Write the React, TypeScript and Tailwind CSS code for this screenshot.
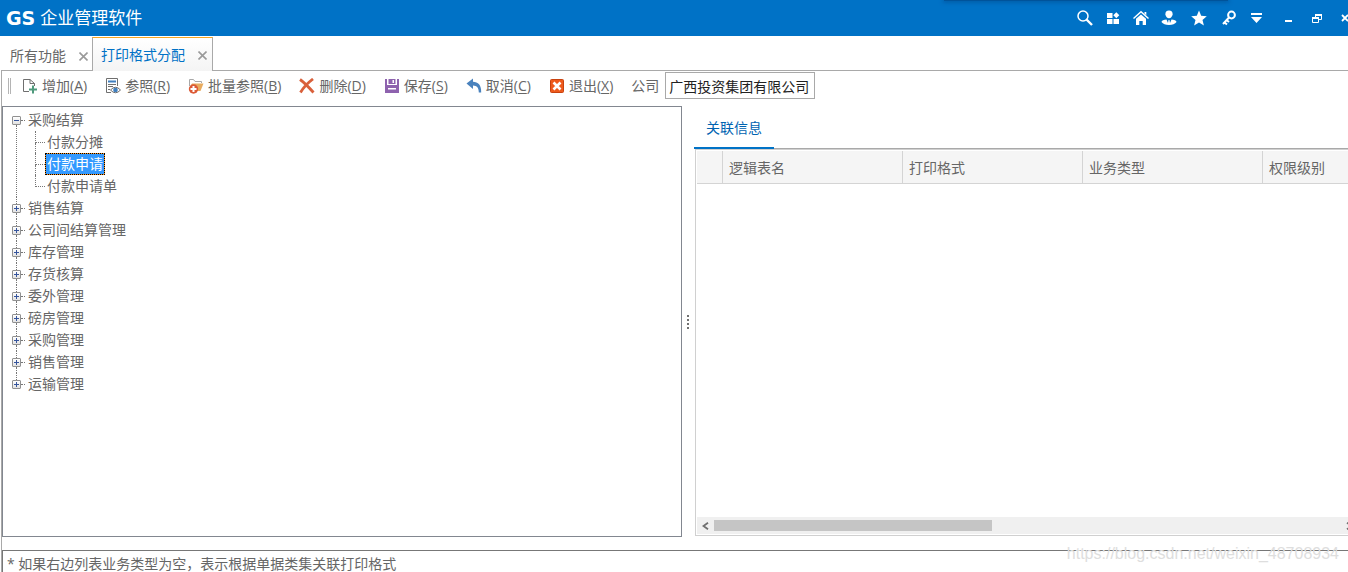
import { useState } from "react";
import type { ReactNode } from "react";

type TreeItem = { name: string; children?: string[] };

const tree: TreeItem[] = [
  { name: "采购结算", children: ["付款分摊", "付款申请", "付款申请单"] },
  { name: "销售结算" },
  { name: "公司间结算管理" },
  { name: "库存管理" },
  { name: "存货核算" },
  { name: "委外管理" },
  { name: "磅房管理" },
  { name: "采购管理" },
  { name: "销售管理" },
  { name: "运输管理" },
];

const columns = ["逻辑表名", "打印格式", "业务类型", "权限级别"];

const toolbar: { label: string; hotkey: string; icon: ReactNode }[] = [
  {
    label: "增加",
    hotkey: "A",
    icon: (
      <svg viewBox="0 0 16 16" className="h-4 w-4" fill="none">
        <path d="M7 13.5H1.5V1.5H8L12.5 5.5V8M8 1.5V5.5H12.5" stroke="#6f6f6f" />
        <path d="M11 7.5V15.5M7 11.5H15" stroke="#4f9a7c" strokeWidth="2" />
      </svg>
    ),
  },
  {
    label: "参照",
    hotkey: "R",
    icon: (
      <svg viewBox="0 0 16 16" className="h-4 w-4" fill="none">
        <path d="M6 14.5H1.5V.5H12.5V8" stroke="#6f6f6f" />
        <path d="M3 3.5H11" stroke="#3f7fbf" strokeWidth="2" />
        <path d="M3 6.5H11M3 8.5H8M3 11.5H5" stroke="#6f6f6f" />
        <path d="M5.5 12Q10.5 6.5 15.5 12Q10.5 17.5 5.5 12Z" fill="#fff" stroke="#6f6f6f" />
        <circle cx="10.5" cy="12" r="2.3" fill="#3f7fbf" />
      </svg>
    ),
  },
  {
    label: "批量参照",
    hotkey: "B",
    icon: (
      <svg viewBox="0 0 16 16" className="h-4 w-4" fill="none">
        <path d="M1.5 8V1.5H5.5L7 3.5H13.5V5" stroke="#a8a8a8" />
        <path d="M4 5.5H15.5L12.5 13H9L2.5 8Z" fill="#e8ab5f" />
        <circle cx="5.5" cy="11" r="4.7" fill="#dc5a36" />
        <path d="M5.5 8V14M2.5 11H8.5" stroke="#fff" strokeWidth="2" />
      </svg>
    ),
  },
  {
    label: "删除",
    hotkey: "D",
    icon: (
      <svg viewBox="0 0 16 16" className="h-4 w-4" fill="none">
        <path d="M1 1.5Q6 5 14.5 14.5M14 1Q6 7 1.5 14.5" stroke="#d9603b" strokeWidth="2.8" />
      </svg>
    ),
  },
  {
    label: "保存",
    hotkey: "S",
    icon: (
      <svg viewBox="0 0 16 16" className="h-4 w-4">
        <path d="M1 1H3V7H13V1H15V15H1Z" fill="#8e62ae" />
        <path d="M4.500 1H11.500V6H4.500Z" fill="#8e62ae" />
        <path d="M8.500 2H10V5H8.500ZM4 10H12V11.500H4Z" fill="#fff" />
      </svg>
    ),
  },
  {
    label: "取消",
    hotkey: "C",
    icon: (
      <svg viewBox="0 0 16 16" className="h-4 w-4">
        <path d="M.5 5.500L7 .5V3.800C12 4 15.500 7 15.200 14.500H12.800C12.800 10 11 7.800 7 7.600V11Z" fill="#4a82bd" />
      </svg>
    ),
  },
  {
    label: "退出",
    hotkey: "X",
    icon: (
      <svg viewBox="0 0 16 16" className="h-4 w-4" fill="none">
        <rect x="1.500" y="1.500" width="13" height="13" rx="1" fill="#ee5a1c" stroke="#c8420f" />
        <path d="M4.500 4.500L11.500 11.500M11.500 4.500L4.500 11.500" stroke="#fff" strokeWidth="2.600" />
      </svg>
    ),
  },
];

const headerIcons: { title: string; width: string; icon: ReactNode }[] = [
  {
    title: "搜索",
    width: "w-7",
    icon: (
      <svg viewBox="0 0 16 16" className="h-4 w-4" fill="none" stroke="#fff">
        <circle cx="6" cy="6" r="5" strokeWidth="1.500" />
        <path d="M9.500 9.500L15 15" strokeWidth="2.400" />
      </svg>
    ),
  },
  {
    title: "应用",
    width: "w-7",
    icon: (
      <svg viewBox="0 0 16 16" className="h-4 w-4" fill="#fff">
        <path d="M2 3H7.500V8H2ZM2 9H7.500V14H2ZM8.500 9H14V14H8.500ZM11.300 2.300L14.300 5.300L11.300 8.300L8.300 5.300Z" />
      </svg>
    ),
  },
  {
    title: "首页",
    width: "w-7",
    icon: (
      <svg viewBox="0 0 16 16" className="h-4 w-4">
        <path d="M.5 8.500L8 1.800L15.500 8.500" fill="none" stroke="#fff" strokeWidth="1.500" />
        <path d="M3 8.800L8 4.500L13 8.800V15H9.700V11H6.300V15H3ZM11.500 2H13.300V5.200L11.500 3.800Z" fill="#fff" />
      </svg>
    ),
  },
  {
    title: "用户",
    width: "w-7",
    icon: (
      <svg viewBox="0 0 16 16" className="h-4 w-4" fill="#fff">
        <path d="M8 .5C10.500 .5 11.800 2 11.600 4.300C11.400 6.500 10 8.300 8 8.300C6 8.300 4.600 6.500 4.400 4.300C4.200 2 5.500 .5 8 .5Z" />
        <path d="M.5 12C.5 10.500 3 9.700 5.500 9.500L7 13L7.500 10H8.500L9 13L10.500 9.500C13 9.700 15.500 10.500 15.500 12C14 14 11.500 15 8 15S2 14 .5 12Z" />
      </svg>
    ),
  },
  {
    title: "收藏",
    width: "w-[30px]",
    icon: (
      <svg viewBox="0 0 16 16" className="h-4 w-4" fill="#fff">
        <path d="M8 .5L10.200 5.700L15.800 6.200L11.500 9.900L12.900 15.500L8 12.500L3.100 15.500L4.500 9.900L.2 6.200L5.800 5.700Z" />
      </svg>
    ),
  },
  {
    title: "权限",
    width: "w-[30px]",
    icon: (
      <svg viewBox="0 0 16 16" className="h-4 w-4" fill="none" stroke="#fff">
        <circle cx="10.500" cy="5" r="3.400" strokeWidth="2" />
        <path d="M8 7.500L2 14M3 12L6 14.500M5.500 10L8 12" strokeWidth="2" />
      </svg>
    ),
  },
  {
    title: "菜单",
    width: "w-7",
    icon: (
      <svg viewBox="0 0 16 16" className="h-4 w-4" fill="#fff">
        <path d="M2 3H13V5H2ZM2 7H13L7.500 13Z" />
      </svg>
    ),
  },
  {
    title: "最小化",
    width: "w-8",
    icon: (
      <svg viewBox="0 0 16 16" className="h-4 w-4" fill="#fff">
        <path d="M4 10H11V12H4Z" />
      </svg>
    ),
  },
  {
    title: "还原",
    width: "w-7",
    icon: (
      <svg viewBox="0 0 16 16" className="h-4 w-4" fill="none" stroke="#fff">
        <path d="M6.500 7V4.500H12.500V9.500H9.500M3.500 7.500H9.500V12.500H3.500Z" />
        <path d="M6 5H13M3 8H10" strokeWidth="2" />
      </svg>
    ),
  },
  {
    title: "关闭",
    width: "w-7",
    icon: (
      <svg viewBox="0 0 16 16" className="h-4 w-4" fill="none" stroke="#fff">
        <path d="M5 5L11 11M11 5L5 11" strokeWidth="1.800" />
      </svg>
    ),
  },
];

function CloseMark() {
  return (
    <svg viewBox="0 0 9 9" className="h-[9px] w-[9px]" fill="none" stroke="#9a9a9a" strokeWidth="1.600">
      <path d="M.5 .5L8.500 8.500M8.500 .5L.5 8.500" />
    </svg>
  );
}

function Header() {
  return (
    <header className="relative flex h-9 shrink-0 items-center justify-between overflow-hidden bg-[#0072c6] pl-[6px] text-white">
      <div className="flex items-center gap-[5px]">
        <span className="font-['DejaVu_Sans',sans-serif] text-[19px] leading-9 font-bold">GS</span>
        <h1 className="text-[17px] leading-9">企业管理软件</h1>
      </div>
      <div className="-mr-[5px] flex h-9 items-center pb-px">
        {headerIcons.map((b) => (
          <button key={b.title} title={b.title} className={`flex shrink-0 justify-end ${b.width}`}>
            {b.icon}
          </button>
        ))}
      </div>
      <div className="absolute top-0 right-[120px] h-px w-[284px] bg-[#00539a] shadow-[0_0_4px_1px_#00539a]" />
    </header>
  );
}

function Tabs() {
  return (
    <nav className="flex h-[35px] shrink-0 pl-px">
      <div className="flex w-[91px] items-center justify-between border-b border-[#a9a9a9] pt-[6px] pr-1 pl-[9px]">
        <button>所有功能</button>
        <button aria-label="关闭 所有功能"><CloseMark /></button>
      </div>
      <div className="mt-px flex w-[121px] items-center justify-between border-x border-t border-x-[#a9a9a9] border-t-[#f5a623] bg-linear-to-b from-white to-[#f4f4f4] pt-px pr-[5px] pl-2 text-[#0072c6]">
        <button>打印格式分配</button>
        <button aria-label="关闭 打印格式分配"><CloseMark /></button>
      </div>
      <div className="flex-1 border-b border-[#a9a9a9]" />
    </nav>
  );
}

function Toolbar() {
  const [company, setCompany] = useState("广西投资集团有限公司");

  return (
    <div className="mb-[5px] flex h-[30px] shrink-0 items-center pl-[6px]">
      <span className="mr-[11px] h-4 w-[3px] shrink-0 border-x border-[#b4b4b4]" />
      {toolbar.map((t) => (
        <button key={t.label} className="mr-[18px] flex shrink-0 items-center gap-1 whitespace-nowrap">
          {t.icon}
          <span>
            {t.label}(<span className="underline underline-offset-2">{t.hotkey}</span>)
          </span>
        </button>
      ))}
      <label htmlFor="company" className="mr-[6px] shrink-0">公司</label>
      <input
        id="company"
        className="mb-px h-[27px] w-[150px] border border-[#a9a9a9] bg-white px-[3px] text-[#222]"
        value={company}
        onChange={(e) => setCompany(e.target.value)}
      />
    </div>
  );
}

function Tree() {
  const [selected, setSelected] = useState("付款申请");
  const [open, setOpen] = useState<string[]>(["采购结算"]);

  function toggle(name: string) {
    setOpen(open.includes(name) ? open.filter((n) => n !== name) : [...open, name]);
  }

  return (
    <ul className="overflow-hidden border border-[#828790] pt-[2px] pl-[9px]">
      {tree.map((item, i) => {
        const expanded = !!item.children && open.includes(item.name);
        return (
          <li key={item.name} className="flex">
            <div className="flex w-[9px] flex-col">
              <span className={`ml-1 h-[7px] border-l border-dotted ${i === 0 ? "border-transparent" : "border-[#777]"}`} />
              <button
                aria-label={item.name}
                className="h-[9px] w-[9px] shrink-0 rounded-[1px] border border-[#919191] bg-linear-to-b from-white to-[#e2e2e2]"
                onClick={() => toggle(item.name)}
              >
                <svg viewBox="0 0 7 7" className="h-[7px] w-[7px]" stroke="#35549c">
                  <path d={expanded ? "M1 3.500H6" : "M1 3.500H6M3.500 1V6"} />
                </svg>
              </button>
              <span className={`ml-1 flex-1 border-l border-dotted ${i === tree.length - 1 ? "border-transparent" : "border-[#777]"}`} />
            </div>
            <span className="mt-[11px] h-px w-1 border-t border-dotted border-[#777]" />
            <div>
              <button className="block h-[22px] px-[3px] leading-[22px]" onClick={() => toggle(item.name)}>
                {item.name}
              </button>
              {expanded && (
                <ul className="pl-[10px]">
                  {item.children!.map((child, j) => (
                    <li key={child} className="flex h-[22px]">
                      <div className="flex w-[10px] flex-col">
                        <span className="h-3 border-b border-l border-dotted border-[#777]" />
                        {j < item.children!.length - 1 && <span className="flex-1 border-l border-dotted border-[#777]" />}
                      </div>
                      <button
                        className={
                          child === selected
                            ? "border border-dotted border-black bg-[#ff9420] leading-5 text-white"
                            : "border border-transparent leading-5"
                        }
                        onClick={() => setSelected(child)}
                      >
                        <span className={child === selected ? "block bg-[#3399ff] px-px" : "block px-px"}>{child}</span>
                      </button>
                    </li>
                  ))}
                </ul>
              )}
            </div>
          </li>
        );
      })}
    </ul>
  );
}

function RelatedInfo() {
  return (
    <section className="flex min-w-0 flex-col overflow-hidden pb-px">
      <div className="flex h-[43px] shrink-0">
        <button className="w-20 border-b-2 border-[#0072c6] pt-[2px] text-[#0063b1]">关联信息</button>
        <div className="flex-1 border-b border-[#a9a9a9]" />
      </div>
      <div className="ml-px flex min-h-0 flex-1 flex-col border-y border-l border-[#d0d0d0] pt-px pb-px pl-px">
        <div className="min-h-0 flex-1 overflow-hidden">
          <table className="w-[746px] table-fixed border-separate border-spacing-0">
            <thead>
              <tr className="h-[33px] bg-[#f5f5f5]">
                <th className="w-[26px] border-r border-b border-[#d4d4d4]" />
                {columns.map((c) => (
                  <th key={c} className="w-[180px] border-r border-b border-[#d4d4d4] px-[6px] pt-[2px] text-left font-normal">
                    {c}
                  </th>
                ))}
              </tr>
            </thead>
            <tbody />
          </table>
        </div>
        <div className="-mr-1 flex h-[17px] shrink-0 items-center bg-[#f0f0f0]">
          <button aria-label="向左滚动" className="flex w-[17px] shrink-0 justify-center">
            <svg viewBox="0 0 7 8" className="h-2 w-[7px]" fill="none" stroke="#707070" strokeWidth="1.800">
              <path d="M6 .7L1.500 4L6 7.300" />
            </svg>
          </button>
          <div className="flex-1">
            <div className="h-[11px] w-[44%] bg-[#c5c5c5]" />
          </div>
          <button aria-label="向右滚动" className="flex w-[6px] shrink-0">
            <svg viewBox="0 0 7 8" className="h-2 w-[7px] shrink-0" fill="none" stroke="#707070" strokeWidth="1.800">
              <path d="M1 .7L5.500 4L1 7.300" />
            </svg>
          </button>
        </div>
      </div>
    </section>
  );
}

export default function App() {
  return (
    <div className="relative flex h-screen flex-col overflow-hidden bg-white font-['Open_Sans','Noto_Sans_CJK_SC',sans-serif] text-[14px] leading-5 text-[#666]">
      <Header />
      <Tabs />
      <main className="ml-px flex min-h-0 flex-1 flex-col border-l border-[#a9a9a9]">
        <Toolbar />
        <div className="grid min-h-0 flex-1 grid-cols-[680fr_12px_654fr] grid-rows-1">
          <Tree />
          <div className="flex flex-col items-center justify-center gap-[2px]">
            <span className="h-[2px] w-[2px] bg-[#707070]" />
            <span className="h-[2px] w-[2px] bg-[#707070]" />
            <span className="h-[2px] w-[2px] bg-[#707070]" />
            <span className="h-[2px] w-[2px] bg-[#707070]" />
          </div>
          <RelatedInfo />
        </div>
        <footer className="mt-[13px] h-[22px] shrink-0 overflow-hidden border-t border-l border-[#777] pt-[3px] pl-1">
          <p className="whitespace-nowrap">* 如果右边列表业务类型为空，表示根据单据类集关联打印格式</p>
        </footer>
      </main>
      <span className="absolute right-[9px] bottom-2 font-['Liberation_Sans',sans-serif] text-[16px] leading-5 text-[#dedede]">
        https://blog.csdn.net/weixin_48708934
      </span>
    </div>
  );
}
